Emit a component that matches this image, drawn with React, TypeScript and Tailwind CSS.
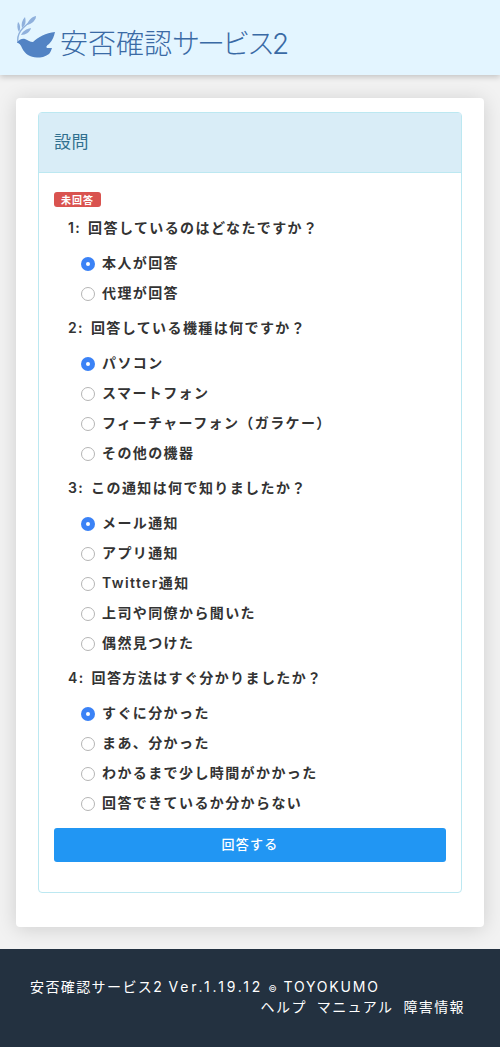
const questions = [
  { label: '1: 回答しているのはどなたですか？', options: ['本人が回答', '代理が回答'] },
  { label: '2: 回答している機種は何ですか？', options: ['パソコン', 'スマートフォン', 'フィーチャーフォン（ガラケー）', 'その他の機器'] },
  { label: '3: この通知は何で知りましたか？', options: ['メール通知', 'アプリ通知', 'Twitter通知', '上司や同僚から聞いた', '偶然見つけた'] },
  { label: '4: 回答方法はすぐ分かりましたか？', options: ['すぐに分かった', 'まあ、分かった', 'わかるまで少し時間がかかった', '回答できているか分からない'] },
];

function Logo() {
  return (
    <svg width="42" height="44" viewBox="0 0 42 44" className="shrink-0">
      <path d="M2 28 C1 22 3 17 7 13 C11 9 15 6 19 3" fill="none" stroke="#8fb0dc" strokeWidth="1.4" />
      <path d="M3 17 C1 14 1 10 2 7 C4 9 5 13 3 17Z" fill="#8fb0dc" />
      <path d="M6 13 C5 9 6 5 9 2 C10 6 10 10 6 13Z" fill="#8fb0dc" />
      <path d="M5 20 C7 16 10 14 15 13 C14 17 10 20 5 20Z" fill="#8fb0dc" />
      <path d="M11 10 C12 6 15 2 20 1 C20 5 16 9 11 10Z" fill="#8fb0dc" />
      <path d="M1 27.5 C3 25 6 23 9 24 C12 25 14 27 17 27 C22 22 30 18 39 17 C38 21 37 25 33 29 C30 31 30 32 31 33 C33 33 35 33 36 33 C35 36 34 38 33 39 C29 42 25 42.5 21 42.5 C14 42.5 9 39 6 33 C5 30 3 28 1 27.5Z" fill="#5283c4" />
    </svg>
  );
}

function Radio({ checked }: { checked: boolean }) {
  if (checked) {
    return (
      <span className="flex h-[14px] w-[14px] shrink-0 items-center justify-center rounded-full bg-[#3b82f6]">
        <span className="h-1 w-1 rounded-full bg-white" />
      </span>
    );
  }
  return <span className="h-[14px] w-[14px] shrink-0 rounded-full border border-[#b5b5b5] bg-white" />;
}

export default function App() {
  return (
    <div className="flex min-h-screen flex-col bg-[#f2f2f2] font-['Inter','Noto_Sans_CJK_JP',sans-serif] text-[14px] tracking-[1.4px] text-[#333333]">
      <header className="relative flex h-[75px] items-start gap-[2px] bg-[#e3f5ff] pl-[16px] pt-[15px] shadow-[0_2px_6px_rgba(0,0,0,0.2)]">
        <Logo />
        <span className="mt-[9px] text-[28px] leading-[40px] font-light tracking-normal whitespace-nowrap text-[#3a6aa5]">
          安否確認<span className="tracking-[-3px]">サービス</span>2
        </span>
      </header>

      <main className="px-[16px] pt-[23px] pb-[22px]">
        <div className="rounded-[4px] bg-white px-[22px] pt-[14px] pb-[34px] shadow-[0_2px_20px_rgba(0,0,0,0.15)]">
          <section className="rounded-[4px] border border-[#bce8f1]">
            <h2 className="flex h-[60px] items-center border-b border-[#bce8f1] bg-[#d9edf7] px-[15px] text-[17px] font-normal tracking-[0.5px] text-[#31708f]">
              設問
            </h2>
            <div className="px-[15px] pt-[19px] pb-[30px]">
              <span className="mb-[2px] flex h-[15px] w-[47px] items-center justify-center rounded-[3px] bg-[#d9534f] text-[10px] leading-none font-bold tracking-[1px] text-white">
                未回答
              </span>
              {questions.map((q) => (
                <div key={q.label}>
                  <p className="flex h-[36px] items-center pl-[14px] font-semibold whitespace-pre [word-spacing:2px]">{q.label}</p>
                  <ul className="mt-[4px]">
                    {q.options.map((opt, i) => (
                      <li key={opt} className="flex h-[30px] items-center gap-[7px] pl-[27px] font-semibold whitespace-nowrap">
                        <Radio checked={i === 0} />
                        <span className="pb-[3px]">{opt}</span>
                      </li>
                    ))}
                  </ul>
                </div>
              ))}
              <button className="mt-[9px] flex h-[34px] w-full items-center justify-center rounded-[3px] bg-[#2196f3] text-[13px] font-medium tracking-[1.3px] text-white">
                回答する
              </button>
            </div>
          </section>
        </div>
      </main>

      <footer className="h-[98px] bg-[#233140] px-[30px] pt-[28px] text-[14px] leading-[20px] text-white">
        <p className="h-[20px] whitespace-pre">
          安否確認サービス2 <span className="tracking-[2.8px]">Ver.1.19.12</span> <span className="text-[9px]">©</span> <span className="tracking-[1.8px]">TOYOKUMO</span>
        </p>
        <nav className="flex justify-end gap-[10px] pr-[5px]">
          <a>ヘルプ</a>
          <a>マニュアル</a>
          <a>障害情報</a>
        </nav>
      </footer>
    </div>
  );
}
